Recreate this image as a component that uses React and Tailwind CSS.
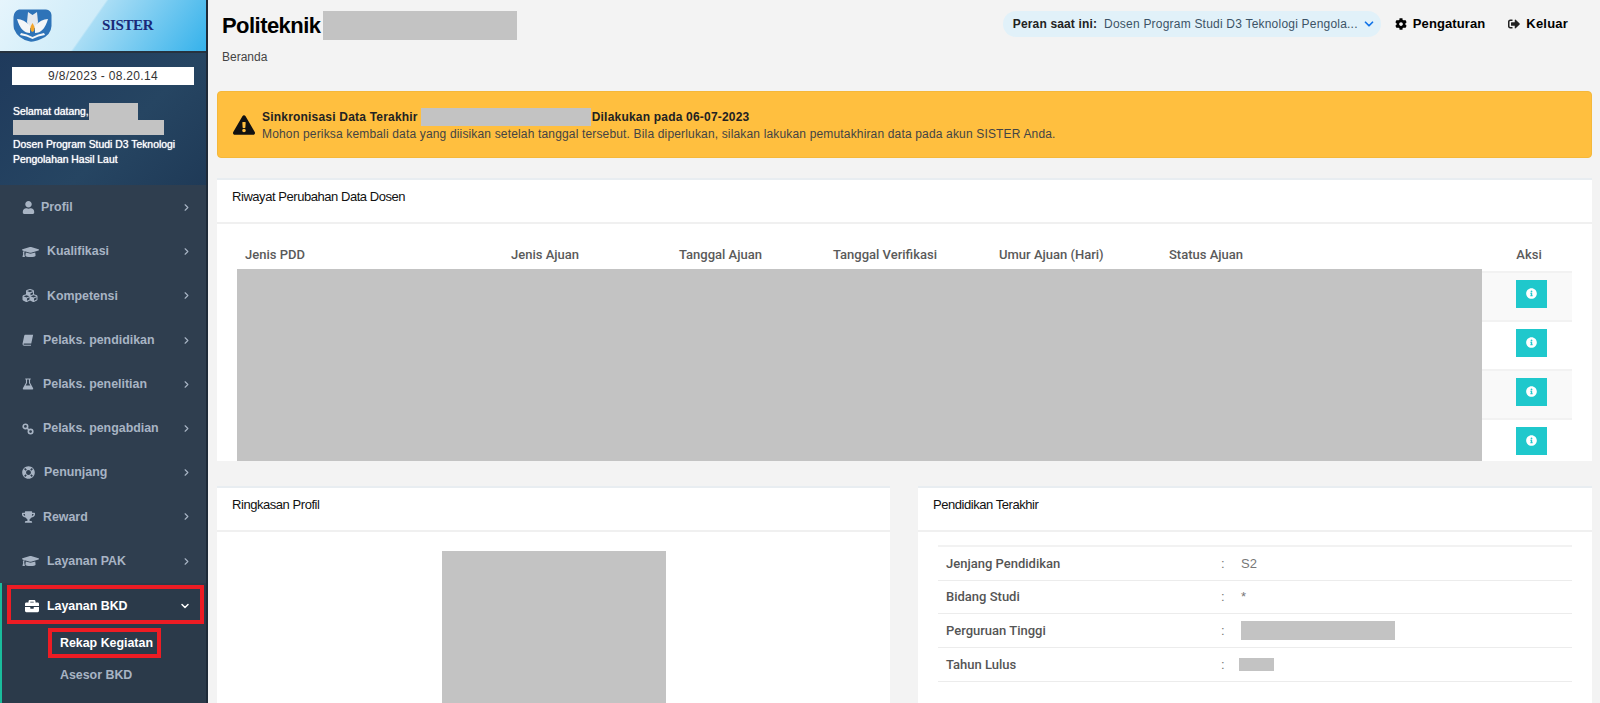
import { FaUser, FaGraduationCap, FaCubes, FaLifeRing, FaTrophy, FaBriefcase, FaCog, FaSignOutAlt, FaInfoCircle, FaExclamationTriangle } from 'react-icons/fa';
import { ChevronRight, ChevronDown } from 'lucide-react';

// font awesome 4 style glyphs the package doesn't have in the same shape
function BookIcon({ className }) {
    return (
        <svg viewBox="0 0 14 14" className={className} fill="currentColor">
            <path d="M3.6 1 H13 L10.8 11 H2.6 Q1.6 11 1.8 12 Q2 12.6 2.8 12.6 H10.6 L10.4 13.6 H2.4 Q0.6 13.6 0.6 11.6 Q0.6 11.2 0.8 10.4 L2.6 2 Q2.8 1 3.6 1 Z" />
        </svg>
    );
}

function FlaskIcon({ className }) {
    return (
        <svg viewBox="0 0 14 14" className={className} fill="currentColor">
            <path d="M3.8 0.5 H10.2 V1.8 H9.4 V5.4 L13 12 Q13.5 13.5 12 13.5 H2 Q0.5 13.5 1 12 L4.6 5.4 V1.8 H3.8 Z M5.9 1.8 V5.8 L4.3 8.8 H9.7 L8.1 5.8 V1.8 Z" fillRule="evenodd" />
        </svg>
    );
}

function LinkIcon({ className }) {
    return (
        <svg viewBox="0 0 14 14" className={className} fill="none" stroke="currentColor" strokeWidth="1.9">
            <circle cx="4" cy="4" r="2.6" />
            <circle cx="10" cy="10" r="2.6" />
            <path d="M5.8 5.8 L8.2 8.2" />
        </svg>
    );
}

const menu = [
    { label: 'Profil', icon: FaUser, size: 'h-[13px] w-[13px]', slot: 'w-[19px]' },
    { label: 'Kualifikasi', icon: FaGraduationCap, size: 'h-[14px] w-[17px]', slot: 'w-[25px]' },
    { label: 'Kompetensi', icon: FaCubes, size: 'h-[15px] w-[16px]', slot: 'w-[25px]' },
    { label: 'Pelaks. pendidikan', icon: BookIcon, size: 'h-[12px] w-[12px]', slot: 'w-[21px]' },
    { label: 'Pelaks. penelitian', icon: FlaskIcon, size: 'h-[12px] w-[12px]', slot: 'w-[21px]' },
    { label: 'Pelaks. pengabdian', icon: LinkIcon, size: 'h-[12px] w-[12px]', slot: 'w-[21px]' },
    { label: 'Penunjang', icon: FaLifeRing, size: 'h-[13px] w-[13px]', slot: 'w-[22px]' },
    { label: 'Reward', icon: FaTrophy, size: 'h-[12px] w-[13px]', slot: 'w-[21px]' },
    { label: 'Layanan PAK', icon: FaGraduationCap, size: 'h-[14px] w-[17px]', slot: 'w-[25px]' },
];

const columns = [
    { label: 'Jenis PDD', width: 'w-[266px]' },
    { label: 'Jenis Ajuan', width: 'w-[168px]' },
    { label: 'Tanggal Ajuan', width: 'w-[154px]' },
    { label: 'Tanggal Verifikasi', width: 'w-[166px]' },
    { label: 'Umur Ajuan (Hari)', width: 'w-[170px]' },
    { label: 'Status Ajuan', width: 'w-[321px]' },
];

const education = [
    { label: 'Jenjang Pendidikan', value: 'S2' },
    { label: 'Bidang Studi', value: '*' },
    { label: 'Perguruan Tinggi', bar: 'w-[154px] h-[19px]' },
    { label: 'Tahun Lulus', bar: 'w-[35px] h-[13px] -ml-0.5' },
];

function Logo() {
    return (
        <svg viewBox="0 0 39 33" className="h-[33px] w-[39px] shrink-0">
            <path d="M6 0.5 H33 Q38 1 38.5 6 L38.5 17 Q38 26 28 30 Q21 33 17 32.6 Q5 30 1 20 Q0.3 17 0.5 8 Q0.8 2 6 0.5 Z" fill="#2e73b8" />
            <path d="M15 3 L19.5 6 L24 3 L25 13 L23 19 H16 L14 13 Z" fill="#e4e9ef" />
            <path d="M4 10 Q11 10 17 17 L17 24 Q8 24 4 10 Z M35 10 Q28 10 22 17 L22 24 Q31 24 35 10 Z" fill="#f4f6f8" />
            <path d="M8 24 Q14 25 19.5 28 Q25 25 31 24 L32 26 Q25 27 19.5 30 Q14 27 7 26 Z" fill="#f4f6f8" />
            <path d="M19.5 14 Q22 18 21.6 20 Q21 23 19.5 23 Q18 23 17.4 20 Q17 18 19.5 14 Z" fill="#f2a52c" />
        </svg>
    );
}

function SideItem({ item }) {
    const Icon = item.icon;
    return (
        <div className="h-[44.2px] flex items-center pl-[22px] pr-[14px] text-[#a8b4c4]">
            <div className={`${item.slot} shrink-0`}>
                <Icon className={item.size} />
            </div>
            <span className="text-[12.4px] font-bold">{item.label}</span>
            <ChevronRight className="ml-auto h-[11px] w-[11px]" strokeWidth={2.5} />
        </div>
    );
}

function Sidebar() {
    return (
        <aside className="w-[208px] shrink-0 flex flex-col bg-[#2f3e4f] border-r-2 border-[#1e2a38]">
            <div className="h-[53px] flex items-center pl-[13px] border-b-2 border-[#26323f] bg-[linear-gradient(125deg,#e6f5fc_0%,#cfecf9_44%,#a9ddf5_45%,#35b2eb_100%)]">
                <Logo />
                <span className="ml-[50px] text-[15px] font-bold tracking-tight text-[#1a2a78] font-['Liberation_Serif',serif]">SISTER</span>
            </div>
            <div className="h-[132px] px-3 pt-[14px] bg-[linear-gradient(135deg,#1f3a5c,#264562_60%,#1f3a57)] text-white">
                <div className="h-[18px] bg-white text-[#333] text-xs tracking-[0.3px] leading-[18px] text-center">9/8/2023 - 08.20.14</div>
                <div className="mt-[17px] ml-[1px] text-[10.4px] leading-[15px] [text-shadow:0_0_1px_#fff]">
                    <div className="flex items-center h-[18px]">
                        Selamat datang,
                        <div className="w-[49px] h-[17px] bg-[#c3c3c3]" />
                    </div>
                    <div className="w-[151px] h-[15px] bg-[#c3c3c3]" />
                    <div className="mt-[2px]">Dosen Program Studi D3 Teknologi</div>
                    <div>Pengolahan Hasil Laut</div>
                </div>
            </div>
            <nav className="pt-[0.5px]">
                {menu.map((item) => (
                    <SideItem key={item.label} item={item} />
                ))}
            </nav>
            <div className="flex-1 bg-[#2b3a4a] border-l-2 border-[#1abc9c]">
                <div className="ml-[5px] mt-[2px] w-[197px] h-[39px] border-4 border-[#ed1c24] flex items-center pt-[3px] pl-[14px] pr-[9px] text-white">
                    <div className="w-[22px] shrink-0">
                        <FaBriefcase className="h-[14px] w-[14px]" />
                    </div>
                    <span className="text-[12.4px] font-bold">Layanan BKD</span>
                    <ChevronDown className="ml-auto h-[12px] w-[12px]" strokeWidth={3} />
                </div>
                <div className="ml-[46px] mt-[4px] w-[113px] h-[30px] border-4 border-[#ed1c24] flex items-center pt-[1px] pl-[8px] text-white text-[12.4px] font-bold whitespace-nowrap">Rekap Kegiatan</div>
                <div className="ml-[58px] mt-[8px] text-[12.4px] font-bold text-[#a8b4c4]">Asesor BKD</div>
            </div>
        </aside>
    );
}

function TopBar() {
    return (
        <div className="h-[91px] flex items-start">
            <div className="pl-[14px] pt-[11px]">
                <div className="flex items-center h-[29px]">
                    <h1 className="w-[101px] text-[22px] font-bold text-black tracking-tight">Politeknik</h1>
                    <div className="w-[194px] h-[29px] bg-[#c3c3c3]" />
                </div>
                <div className="mt-[9px] text-xs text-[#444]">Beranda</div>
            </div>
            <div className="ml-auto flex items-center mt-[11px] pr-[32px] text-[13px]">
                <div className="w-[378px] h-[26px] rounded-full bg-[#e1f1f9] flex items-center pl-[10px] pr-[3px] text-xs whitespace-nowrap">
                    <span className="font-bold text-[#222] tracking-[0.15px]">Peran saat ini:</span>
                    <span className="ml-[7px] text-[#3c5366] tracking-[0.21px]">Dosen Program Studi D3 Teknologi Pengola...</span>
                    <ChevronDown className="ml-auto mr-[2px] h-[14px] w-[14px] text-[#1173e8]" strokeWidth={3} />
                </div>
                <FaCog className="ml-[14px] text-xs text-black" />
                <span className="ml-[6px] font-bold text-black tracking-[0.1px]">Pengaturan</span>
                <FaSignOutAlt className="ml-[23px] text-xs text-[#222]" />
                <span className="ml-[6px] font-bold text-black tracking-[0.2px]">Keluar</span>
            </div>
        </div>
    );
}

function Alert() {
    return (
        <div className="ml-[9px] mr-[8px] h-[67px] rounded bg-[#ffbf3f] border border-[#f5b83a] flex items-center pl-[15px] text-xs text-[#444]">
            <FaExclamationTriangle className="text-[22px] text-[#111] shrink-0" />
            <div className="ml-[7px]">
                <div className="flex items-center h-[18px] font-bold text-[#222] tracking-[0.2px]">
                    Sinkronisasi Data Terakhir
                    <div className="ml-[3px] w-[170px] h-[18px] bg-[#c3c3c3]" />
                    <span className="ml-[1px]">Dilakukan pada 06-07-2023</span>
                </div>
                <div className="tracking-[0.16px]">Mohon periksa kembali data yang diisikan setelah tanggal tersebut. Bila diperlukan, silakan lakukan pemutakhiran data pada akun SISTER Anda.</div>
            </div>
        </div>
    );
}

function CardHeader({ title }) {
    return (
        <div className="h-[44px] pl-[15px] pt-[7px] border-b-2 border-[#f0f0f0] text-[13px] text-[#111] tracking-[-0.45px]">
            {title}
        </div>
    );
}

function HistoryCard() {
    return (
        <div className="ml-[9px] mr-[8px] mt-5 h-[283px] overflow-hidden bg-white border-t-2 border-[#e8edf1]">
            <CardHeader title="Riwayat Perubahan Data Dosen" />
            <div className="mx-[20px] mt-[20px]">
                <div className="flex h-[28px] items-start pt-[1px] text-[13px] font-medium text-[#5a5a5a] font-['Roboto',sans-serif]">
                    {columns.map((col) => (
                        <div key={col.label} className={`${col.width} pl-2 shrink-0`}>{col.label}</div>
                    ))}
                    <div className="flex-1 text-center pl-[4px]">Aksi</div>
                </div>
                <div className="flex -mt-[3px]">
                    <div className="w-[1245px] h-[192px] bg-[#c3c3c3] shrink-0" />
                    <div className="flex-1 pt-[2px]">
                        {[0, 1, 2, 3].map((row) => (
                            <div key={row} className={`h-[49px] pt-[7px] pl-[8px] flex justify-center border-t-2 border-[#f2f2f2] ${row % 2 === 0 ? 'bg-[#f9f9f9]' : 'bg-white'}`}>
                                <div className="w-[31px] h-[28px] bg-[#1fc8cc] flex justify-center pt-[8px] text-white text-[11px]">
                                    <FaInfoCircle />
                                </div>
                            </div>
                        ))}
                    </div>
                </div>
            </div>
        </div>
    );
}

function ProfileCard() {
    return (
        <div className="w-[673px] bg-white border-t-2 border-[#e8edf1]">
            <CardHeader title="Ringkasan Profil" />
            <div className="flex justify-center pt-[19px]">
                <div className="w-[224px] h-[180px] bg-[#c3c3c3]" />
            </div>
        </div>
    );
}

function EducationCard() {
    return (
        <div className="w-[674px] bg-white border-t-2 border-[#e8edf1]">
            <CardHeader title="Pendidikan Terakhir" />
            <div className="mx-[20px] mt-[13px] border-t-2 border-[#f2f2f2]">
                {education.map((row) => (
                    <div key={row.label} className="h-[33.7px] flex items-center pl-2 border-b border-[#ececec] text-[13px]">
                        <span className="w-[275px] font-medium text-[#555] font-['Roboto',sans-serif]">{row.label}</span>
                        <span className="w-[20px] text-[#777]">:</span>
                        {row.bar ? <div className={`${row.bar} bg-[#c3c3c3]`} /> : <span className="text-[#777]">{row.value}</span>}
                    </div>
                ))}
            </div>
        </div>
    );
}

export default function App() {
    return (
        <div className="h-[703px] w-[1600px] overflow-hidden flex bg-[#f3f3f3] font-['Liberation_Sans',sans-serif]">
            <Sidebar />
            <main className="flex-1 min-w-0">
                <TopBar />
                <Alert />
                <HistoryCard />
                <div className="ml-[9px] mr-[8px] mt-[25px] flex justify-between h-[300px]">
                    <ProfileCard />
                    <EducationCard />
                </div>
            </main>
        </div>
    );
}
